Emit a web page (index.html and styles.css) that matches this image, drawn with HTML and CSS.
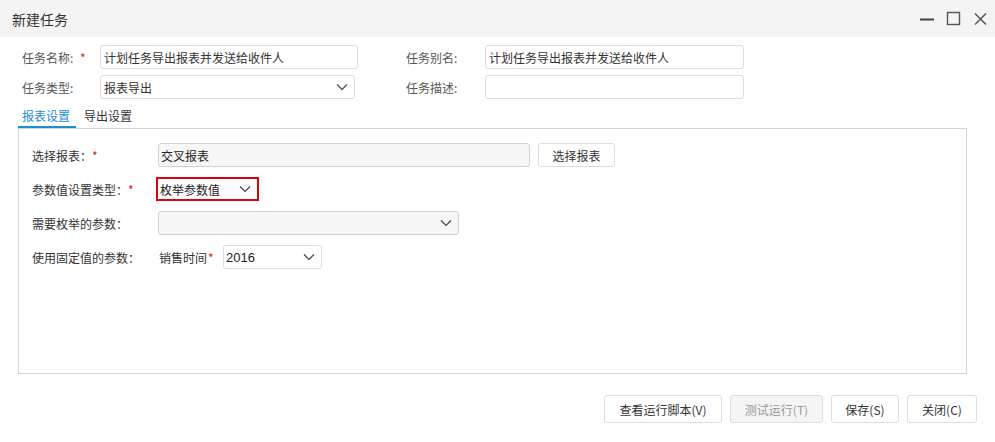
FILE: index.html
```html
<!DOCTYPE html>
<html lang="zh-CN">
<head>
<meta charset="utf-8">
<title>新建任务</title>
<link rel="stylesheet" href="styles.css">
</head>
<body>
<div class="dialog">
  <div class="titlebar">
    <span class="title">新建任务</span>
    <div class="winctl">
      <svg class="ico" width="16" height="16" viewBox="0 0 16 16"><path d="M1 8.5h14" stroke="#444" stroke-width="2"/></svg>
      <svg class="ico" width="16" height="16" viewBox="0 0 16 16"><rect x="1.5" y="1.5" width="12" height="12" fill="none" stroke="#555" stroke-width="1.4"/></svg>
      <svg class="ico" width="16" height="16" viewBox="0 0 16 16"><path d="M2 2.5l11 11M13 2.5l-11 11" stroke="#555" stroke-width="1.5"/></svg>
    </div>
  </div>

  <div class="head-form">
    <label class="hlabel">任务名称: <span class="req hreq">*</span></label>
    <div class="cell"><div class="input w258">计划任务导出报表并发送给收件人</div></div>
    <label class="hlabel">任务别名:</label>
    <div class="cell"><div class="input w259">计划任务导出报表并发送给收件人</div></div>

    <label class="hlabel">任务类型:</label>
    <div class="cell"><div class="input select w255">报表导出<svg class="chev" width="12" height="8" viewBox="0 0 12 8"><path d="M1 1.5l5 5 5-5" fill="none" stroke="#555" stroke-width="1.3"/></svg></div></div>
    <label class="hlabel">任务描述:</label>
    <div class="cell"><div class="input w259"></div></div>
  </div>

  <div class="tabs">
    <span class="tab active">报表设置</span>
    <span class="tab">导出设置</span>
  </div>

  <div class="panel">
    <div class="prow">
      <label class="plabel">选择报表：<span class="req preq">*</span></label>
      <div class="pinput disabled w372">交叉报表</div>
      <button class="btn small">选择报表</button>
    </div>
    <div class="prow">
      <label class="plabel">参数值设置类型：<span class="req preq">*</span></label>
      <div class="pinput select redbox">枚举参数值<svg class="chev" width="12" height="8" viewBox="0 0 12 8"><path d="M1 1.5l5 5 5-5" fill="none" stroke="#444" stroke-width="1.2"/></svg></div>
    </div>
    <div class="prow">
      <label class="plabel">需要枚举的参数：</label>
      <div class="pinput select disabled w301"><svg class="chev" width="12" height="8" viewBox="0 0 12 8"><path d="M1 1.5l5 5 5-5" fill="none" stroke="#444" stroke-width="1.2"/></svg></div>
    </div>
    <div class="prow">
      <label class="plabel">使用固定值的参数：</label>
      <span class="sublabel">销售时间<span class="req sreq">*</span></span>
      <div class="pinput select w99 year">2016<svg class="chev" width="12" height="8" viewBox="0 0 12 8"><path d="M1 1.5l5 5 5-5" fill="none" stroke="#444" stroke-width="1.2"/></svg></div>
    </div>
  </div>

  <div class="footer">
    <button class="btn b1">查看运行脚本(V)</button>
    <button class="btn b2 off">测试运行(T)</button>
    <button class="btn b3">保存(S)</button>
    <button class="btn b4">关闭(C)</button>
  </div>
</div>
</body>
</html>
```

FILE: styles.css
```css
* { box-sizing: border-box; }
html, body { margin: 0; padding: 0; background: #fff; }
body {
  font-family: "Noto Sans CJK SC", "Noto Sans", "Liberation Sans", sans-serif;
  font-size: 12px;
  color: #333;
  width: 995px;
  height: 442px;
  overflow: hidden;
}
.titlebar {
  height: 37px;
  background: #f4f4f4;
  display: flex;
  align-items: center;
  justify-content: space-between;
  padding: 0 6px 0 12px;
}
.title { font-size: 14px; color: #333; }
.winctl { display: flex; gap: 11px; align-items: center; }
.ico { display: block; }

.head-form {
  padding: 8px 0 0 22px;
  display: grid;
  grid-template-columns: 78px 306px 79px 259px;
  grid-auto-rows: 24px;
  row-gap: 6px;
  align-items: center;
}
.hlabel { color: #555; }
.cell { display: flex; }
.req { color: #e02020; margin-left: 2px; }
.hreq { margin-left: 4px; }
.preq { margin-left: 0; }
.sreq { margin-left: 1px; }
.input {
  height: 24px;
  border: 1px solid #ddd;
  border-radius: 3px;
  padding: 0 3px;
  display: flex;
  align-items: center;
  color: #333;
  background: #fff;
}
.select { justify-content: space-between; padding-right: 6px; }
.w258 { width: 258px; }
.w259 { width: 259px; }
.w255 { width: 255px; }

.tabs {
  display: flex;
  margin: 6px 0 0 18px;
  height: 23px;
  align-items: center;
}
.tab { padding: 0 4px; margin-right: 4px; color: #333; height: 23px; line-height: 21px; }
.tab.active { color: #1f8ecf; border-bottom: 2px solid #1f8ecf; width: 58px; }

.panel {
  margin: 0 28px 0 18px;
  height: 246px;
  border: 1px solid #d4d4d4;
  padding: 14px 0 0 13px;
  display: flex;
  flex-direction: column;
  gap: 10px;
}
.prow { display: flex; align-items: center; height: 24px; }
.plabel { width: 126px; color: #333; }
.pinput {
  height: 24px;
  border: 1px solid #ddd;
  border-radius: 3px;
  display: flex;
  align-items: center;
  padding: 0 2px;
  color: #222;
  background: #fff;
}
.pinput.disabled { background: #f7f7f7; border-color: #d2d2d2; }
.pinput .chev { margin-left: auto; }
.pinput.select { padding-right: 6px; }
.w372 { width: 372px; }
.w301 { width: 301px; }
.w99 { width: 99px; }
.redbox {
  width: 103px;
  height: 24px;
  margin-left: -2px;
  border: 2px solid #e0000b;
  border-radius: 0;
  padding: 0 6px 0 2px;
}
.year { margin-left: 1px; font-size: 13px; font-family: "Liberation Sans", sans-serif; }
.sublabel { width: 64px; padding-left: 1px; color: #333; }

.btn {
  font-family: inherit;
  font-size: 12px;
  color: #333;
  background: #fff;
  border: 1px solid #ddd;
  border-radius: 3px;
  height: 28px;
  padding: 0;
  white-space: nowrap;
  cursor: pointer;
}
.btn.small { height: 24px; width: 77px; margin-left: 8px; }
.btn.off { background: #f5f5f5; color: #999; }

.footer {
  display: flex;
  justify-content: flex-end;
  gap: 8px;
  padding: 21px 18px 0 0;
}
.b1 { width: 118px; }
.b2 { width: 93px; }
.b3 { width: 68px; }
.b4 { width: 70px; }
```
